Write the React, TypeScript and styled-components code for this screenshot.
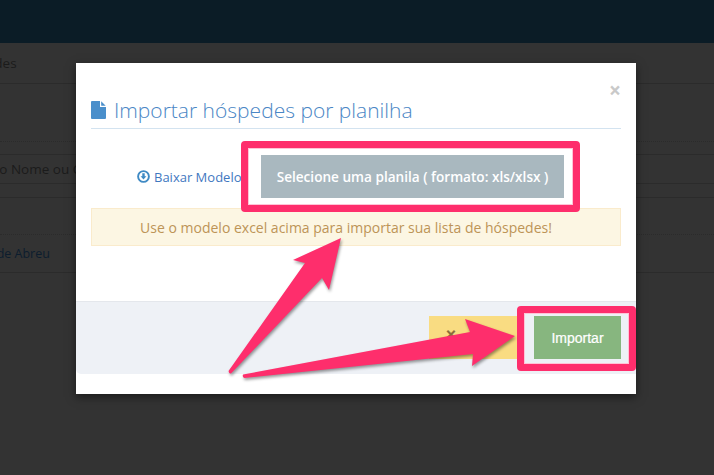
import React from "react"
import styled, { createGlobalStyle } from "styled-components"

const Global = createGlobalStyle`
  html, body {
    margin: 0;
    height: 100%;
    background: #333333;
    font-family: "Open Sans", "Noto Sans", sans-serif;
    overflow: hidden;
  }
`

const Page = styled.div`
  position: relative;
  width: 714px;
  height: 475px;
  overflow: hidden;
  background: #333333;
`

const TopBar = styled.div`
  height: 43px;
  background: #0b1c26;
`

const Row = styled.div<{ $h: number; $dotted?: boolean }>`
  height: ${(p) => p.$h}px;
  box-sizing: border-box;
  display: flex;
  align-items: center;
  white-space: nowrap;
  font-size: 13.5px;
  color: #1b1b1b;
  border-bottom: 1px ${(p) => (p.$dotted ? "dotted" : "solid")} #2b2b2b;
`

const CutText = styled.span<{ $shift: number; $link?: boolean }>`
  margin-left: ${(p) => p.$shift}px;
  color: ${(p) => (p.$link ? "#0c1d2e" : "#1b1b1b")};
  font-size: ${(p) => (p.$link ? "12.5px" : "inherit")};
`

const Modal = styled.div`
  position: absolute;
  left: 76px;
  top: 63px;
  width: 560px;
  height: 331px;
  background: #ffffff;
  box-shadow: 0 3px 9px rgba(0, 0, 0, 0.5);
  display: flex;
  flex-direction: column;
`

const Close = styled.span`
  position: absolute;
  right: 15px;
  top: 16px;
  font-size: 21px;
  line-height: 22px;
  font-weight: 700;
  color: #c9c9c9;
`

const Header = styled.div`
  height: 66px;
  margin: 0 15px;
  box-sizing: border-box;
  padding-top: 34px;
  display: flex;
  align-items: flex-start;
  gap: 8px;
  border-bottom: 1px solid #d3e3f0;
`

const HeaderIcon = styled.svg`
  margin-top: 4px;
  flex: none;
`

const Title = styled.h4`
  margin: 0;
  font-size: 21px;
  line-height: 27px;
  font-weight: 300;
  color: #4a86c5;
`

const UploadRow = styled.div`
  display: flex;
  align-items: center;
  height: 43px;
  margin: 26px 72px 0 61px;
`

const DownloadLink = styled.span`
  display: flex;
  align-items: center;
  gap: 4px;
  width: 124px;
  font-size: 13px;
  color: #3f78bf;
  white-space: nowrap;
`

const FileButton = styled.div`
  width: 303px;
  height: 43px;
  display: flex;
  align-items: center;
  justify-content: center;
  background: #a9b8bf;
  color: #ffffff;
  font-size: 13.6px;
  font-weight: 600;
  white-space: nowrap;
`

const Alert = styled.div`
  height: 38px;
  margin: 10px 15px 0;
  padding-right: 20px;
  box-sizing: border-box;
  display: flex;
  align-items: center;
  justify-content: center;
  background: #fcf6e3;
  border: 1px solid #faebcc;
  color: #bd9457;
  font-size: 14px;
`

const Footer = styled.div`
  height: 73px;
  margin-top: 55px;
  box-sizing: border-box;
  padding: 14px 15px 0 0;
  display: flex;
  justify-content: flex-end;
  gap: 10px;
  background: #eef1f6;
  border-top: 1px solid #e4e7ec;
  border-bottom-left-radius: 5px;
`

const FooterButton = styled.div<{ $bg: string; $w: number; $fg: string }>`
  width: ${(p) => p.$w}px;
  height: 43px;
  display: flex;
  align-items: center;
  justify-content: center;
  background: ${(p) => p.$bg};
  color: ${(p) => p.$fg};
  font-family: "Liberation Sans", Arial, sans-serif;
  font-size: 14px;
  -webkit-text-stroke: 0.2px currentColor;
`

const CancelMark = styled.span`
  width: 100%;
  padding: 0 0 7px 17px;
  font-size: 17px;
  line-height: 17px;
  font-weight: 700;
`

const Highlight = styled.div<{ $x: number; $y: number; $w: number; $h: number }>`
  position: absolute;
  left: ${(p) => p.$x}px;
  top: ${(p) => p.$y}px;
  width: ${(p) => p.$w}px;
  height: ${(p) => p.$h}px;
  box-sizing: border-box;
  border: 7px solid #fe2e6c;
  border-radius: 4px;
  box-shadow: inset 0 0 0 1px #ffc4d6;
`

const Arrows = styled.svg`
  position: absolute;
  left: 0;
  top: 0;
  filter: drop-shadow(1px 2px 1.5px rgba(0, 0, 0, 0.4));
`

const FileIcon = () => (
  <HeaderIcon width="15" height="18" viewBox="0 0 15 18">
    <path d="M1 0H9V6H15V17a1 1 0 0 1-1 1H1a1 1 0 0 1-1-1V1a1 1 0 0 1 1-1Z" fill="#4a8fcb" />
    <path d="M10.2 0.3L14.7 4.8H10.2Z" fill="#4a8fcb" />
  </HeaderIcon>
)

const DownloadIcon = () => (
  <svg width="13" height="13" viewBox="0 0 13 13">
    <circle cx="6.5" cy="6.5" r="5.4" fill="none" stroke="#3f8ac4" strokeWidth="1.9" />
    <path d="M5.3 3.2H7.7V6.2H9.4L6.5 9.6L3.6 6.2H5.3Z" fill="#3f8ac4" />
  </svg>
)

export default function App() {
  return (
    <Page>
      <Global />
      <TopBar />
      <Row $h={41}>
        <CutText $shift={-46}>Hóspedes</CutText>
      </Row>
      <Row $h={58} $dotted />
      <Row $h={13} />
      <Row $h={29}>
        <CutText $shift={-9}>do Nome ou CPF</CutText>
      </Row>
      <Row $h={14} />
      <Row $h={37} $dotted />
      <Row $h={38}>
        <CutText $shift={-40} $link>
          Maria de Abreu
        </CutText>
      </Row>

      <Modal>
        <Close>×</Close>
        <Header>
          <FileIcon />
          <Title>Importar hóspedes por planilha</Title>
        </Header>
        <UploadRow>
          <DownloadLink>
            <DownloadIcon />
            Baixar Modelo
          </DownloadLink>
          <FileButton>Selecione uma planila ( formato: xls/xlsx )</FileButton>
        </UploadRow>
        <Alert>Use o modelo excel acima para importar sua lista de hóspedes!</Alert>
        <Footer>
          <FooterButton $bg="#f9dc82" $w={95} $fg="#8a6d3b">
            <CancelMark>×</CancelMark>
          </FooterButton>
          <FooterButton $bg="#87b67f" $w={87} $fg="#ffffff">
            Importar
          </FooterButton>
        </Footer>
      </Modal>

      <Highlight $x={241} $y={141} $w={339} $h={71} />
      <Highlight $x={517} $y={306} $w={119} $h={65} />

      <Arrows width="714" height="475" viewBox="0 0 714 475">
        <path
          d="M228.5 371 L305 263 L293 260 L341 238 L329 290 L322 278 L231 373.5 Q229 374 228.5 371Z"
          fill="#fe2e6c"
        />
        <path
          d="M243 374.5 L470 332 L465 319 L515 336 L472 366 L473 354 L244.5 378 Q242 377.5 243 374.5Z"
          fill="#fe2e6c"
        />
      </Arrows>
    </Page>
  )
}
